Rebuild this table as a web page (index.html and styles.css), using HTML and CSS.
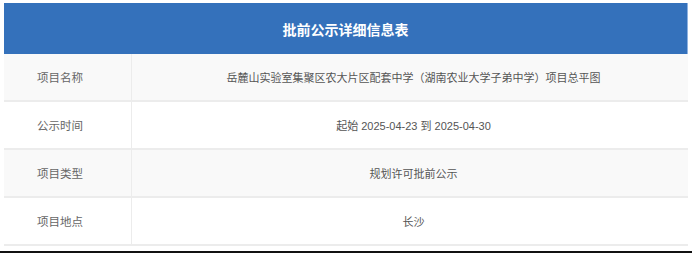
FILE: index.html
```html
<!DOCTYPE html>
<html lang="zh-CN">
<head>
<meta charset="utf-8">
<title>批前公示详细信息表</title>
<link rel="stylesheet" href="styles.css">
</head>
<body>
<div class="page">
  <div class="table">
    <div class="head">批前公示详细信息表</div>
    <div class="row alt">
      <div class="label">项目名称</div>
      <div class="value">岳麓山实验室集聚区农大片区配套中学（湖南农业大学子弟中学）项目总平图</div>
    </div>
    <div class="row">
      <div class="label">公示时间</div>
      <div class="value">起始 2025-04-23 到 2025-04-30</div>
    </div>
    <div class="row alt">
      <div class="label">项目类型</div>
      <div class="value">规划许可批前公示</div>
    </div>
    <div class="row">
      <div class="label">项目地点</div>
      <div class="value">长沙</div>
    </div>
  </div>
  <div class="edge"></div>
</div>
</body>
</html>
```
FILE: styles.css
```css
html, body {
  margin: 0;
  padding: 0;
  background: #ffffff;
}
body {
  font-family: "Liberation Sans", "Noto Sans CJK SC", sans-serif;
  width: 692px;
  height: 253px;
  overflow: hidden;
}
.page {
  display: flex;
  flex-direction: column;
  padding-top: 3px;
}
.table {
  margin: 0 4px;
  display: flex;
  flex-direction: column;
}
.head {
  height: 51px;
  background: #3471bb;
  color: #ffffff;
  font-family: "Noto Sans CJK SC", sans-serif;
  font-weight: 700;
  font-size: 14px;
  display: flex;
  align-items: center;
  justify-content: center;
  border-right: 1px solid #8fb2e0;
}
.row {
  display: grid;
  grid-template-columns: 128px 1fr;
  height: 48px;
  box-sizing: border-box;
  border-bottom: 2px solid #ececec;
  background: #ffffff;
}
.row.alt {
  background: #f9f9f9;
}
.label {
  display: flex;
  align-items: center;
  padding-left: 33px;
  font-family: "Noto Sans CJK SC", sans-serif;
  font-size: 11.5px;
  color: #666666;
  border-right: 1px solid #ececec;
}
.value {
  display: flex;
  align-items: center;
  justify-content: center;
  padding-left: 7px;
  font-size: 11px;
  color: #555555;
}
.edge {
  margin-top: 5px;
  height: 2px;
  background: #111111;
}
```
